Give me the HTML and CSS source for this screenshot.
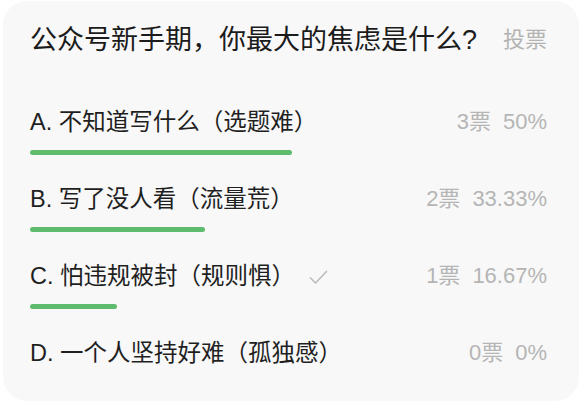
FILE: index.html
```html
<!DOCTYPE html>
<html lang="zh">
<head>
<meta charset="utf-8">
<link rel="stylesheet" href="styles.css">
</head>
<body>
<div class="card">
  <div class="header">
    <div class="title">公众号新手期，你最大的焦虑是什么?</div>
    <div class="tag">投票</div>
  </div>
  <div class="options">
    <div class="option">
      <div class="line">
        <div class="label">A. 不知道写什么（选题难）</div>
        <div class="stats">3票<span class="pct">50%</span></div>
      </div>
      <div class="track"><div class="bar" style="width:50%"></div></div>
    </div>
    <div class="option">
      <div class="line">
        <div class="label">B. 写了没人看（流量荒）</div>
        <div class="stats">2票<span class="pct">33.33%</span></div>
      </div>
      <div class="track"><div class="bar" style="width:33.33%"></div></div>
    </div>
    <div class="option">
      <div class="line">
        <div class="label">C. 怕违规被封（规则惧）<svg class="check" width="19" height="15" viewBox="0 0 19 15"><polyline points="1.5,8 6.5,13 17.5,1.5" fill="none" stroke="#bdbdbd" stroke-width="1.7" stroke-linecap="round" stroke-linejoin="round"/></svg></div>
        <div class="stats">1票<span class="pct">16.67%</span></div>
      </div>
      <div class="track"><div class="bar" style="width:16.67%"></div></div>
    </div>
    <div class="option">
      <div class="line">
        <div class="label">D. 一个人坚持好难（孤独感）</div>
        <div class="stats">0票<span class="pct">0%</span></div>
      </div>
      <div class="track"><div class="bar" style="width:0%"></div></div>
    </div>
  </div>
</div>
</body>
</html>
```

FILE: styles.css
```css
html, body {
  margin: 0;
  padding: 0;
  background: #ffffff;
}
body {
  font-family: "Liberation Sans", "Noto Sans CJK SC", sans-serif;
  padding: 1px 3px 3px 3px;
}
.card {
  background: #f8f8f8;
  border-radius: 24px;
  height: 400px;
  box-sizing: border-box;
  padding: 24px 32px 0 27px;
}
.header {
  display: flex;
  align-items: center;
  justify-content: space-between;
  height: 30px;
}
.title {
  font-size: 27px;
  color: #1b1b1b;
  line-height: 30px;
  white-space: nowrap;
}
.tag {
  font-size: 22px;
  color: #b3b3b3;
  line-height: 30px;
}
.options {
  margin-top: 52px;
  display: flex;
  flex-direction: column;
}
.option {
  height: 77px;
}
.line {
  display: flex;
  align-items: center;
  justify-content: space-between;
  height: 30px;
}
.label {
  font-size: 23.5px;
  line-height: 30px;
  color: #1f1f1f;
  white-space: nowrap;
}
.check {
  margin-left: 14px;
  vertical-align: -1px;
}
.stats {
  font-size: 22px;
  line-height: 30px;
  color: #b5b5b5;
  white-space: nowrap;
}
.pct {
  margin-left: 12px;
}
.track {
  width: 524px;
  height: 5px;
  margin-top: 13px;
}
.bar {
  height: 100%;
  background: #5fbc6e;
  border-radius: 3px;
}
```
